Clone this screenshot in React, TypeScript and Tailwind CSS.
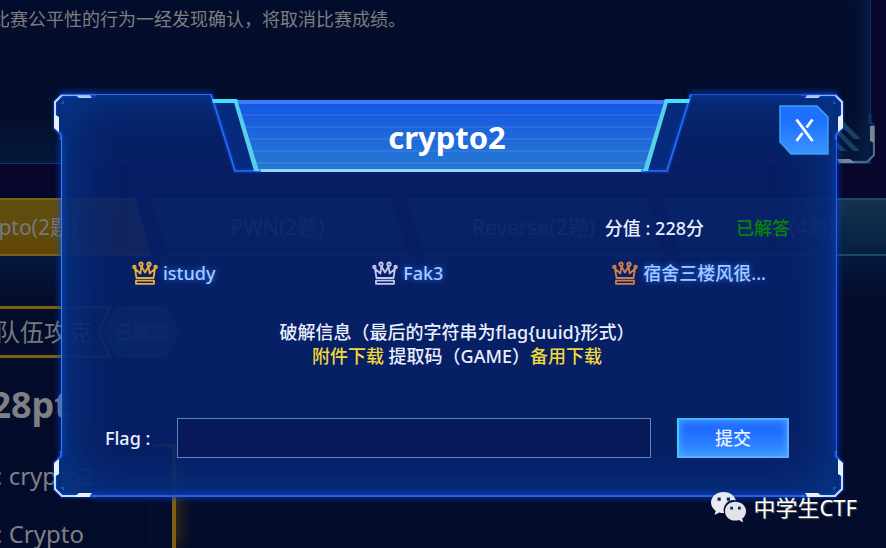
import { useState } from 'react'

const tabs = [
  { name: 'Crypto(2题)', active: true },
  { name: 'PWN(2题)', active: false },
  { name: 'Reverse(2题)', active: false },
  { name: 'Misc(4题)', active: false },
]

const solvers = [
  { name: 'istudy', color: 'text-[#e8ae3c]' },
  { name: 'Fak3', color: 'text-[#c3c6ee]' },
  { name: '宿舍三楼风很...', color: 'text-[#cf7f4c]' },
]

const Crown = ({ className }: { className: string }) => (
  <svg viewBox="0 0 26 24" className={`h-6 w-[26px] shrink-0 ${className}`} fill="none" stroke="currentColor" strokeWidth="1.8" strokeLinejoin="round">
    <path d="M4.500 17 3 7.600 8.400 12.500 9.400 5.200 13 11.500 16.600 5.200 17.600 12.500 23 7.600 21.500 17Z" />
    <path d="M4 19.600h18v3.200H4z" />
    <circle cx="2.400" cy="6" r="1.300" />
    <circle cx="9" cy="3.200" r="1.700" />
    <circle cx="17" cy="3.200" r="1.700" />
    <circle cx="23.600" cy="6" r="1.300" />
  </svg>
)

// top-left corner of the dialog frame, flipped for the other three
const Corner = ({ className }: { className: string }) => (
  <svg viewBox="0 0 46 50" className={`absolute h-[50px] w-[46px] overflow-visible ${className}`} fill="none">
    <path d="M12 45 5 38V12L12 5V45Z" fill="#082c7c" />
    <path d="M11 50V45L5 38V12L12 5H46" stroke="#0a4cff" strokeWidth="5" opacity=".35" />
    <path d="M11 50V45L5 38V12L12 5H46" stroke="#2f72e0" strokeWidth="1.6" />
    <path d="M5 38V12L12 5H40" stroke="#c4dcff" strokeWidth="2" />
    <path d="M24 4H39L42 8H29Z" fill="#e6f0ff" />
    <path d="M4 24 9 27V42L4 38Z" fill="#e6f0ff" />
    <path d="M10 14 14 10V14Z" fill="#1255b8" />
  </svg>
)

const TitleEdge = ({ className }: { className: string }) => (
  <svg viewBox="0 0 50 78" className={`absolute top-0 h-[78px] w-[50px] overflow-visible ${className}`} fill="none">
    <path d="M2 8H23L45 77H24Z" fill="#062a7e" />
    <path d="M0 0 24 77H50" stroke="#0b4dff" strokeWidth="5" opacity=".3" />
    <path d="M0 0 24 77H50" stroke="#2b70e8" strokeWidth="1.6" />
    <path d="M22 5H26L48 77H43Z" fill="#55d0e6" />
    <path d="M1 5H26L27 9H2Z" fill="#45e0ff" />
  </svg>
)

const Backdrop = () => (
  <div className="overflow-hidden">
    <section className="relative mr-[15px] h-[164px] border-r border-b border-[#0b3273] bg-linear-to-b from-[#040d2c] from-70% to-[#05183a] shadow-[inset_-16px_0_20px_-12px_#06254d] pt-[7px]">
      <p className="-ml-2 text-lg leading-6 whitespace-nowrap text-[#7d7e80]">比赛公平性的行为一经发现确认，将取消比赛成绩。</p>
      <svg viewBox="0 0 50 50" className="absolute -right-[5px] -bottom-px h-[50px] w-[50px]" fill="none">
        <path d="M45 8 49 12V41L42 48H45Z" fill="#051638" />
        <path d="M45 0V8L49 12V41L42 48H14" stroke="#0b3273" strokeWidth="3" />
        <path d="M49 12V41L42 48H14" stroke="#66738a" strokeWidth="1.6" />
        <path d="M49 12V29L45 27V12ZM12 45H25L30 49H14Z" fill="#7b8390" />
        <path d="M8 4H15L36 25H29ZM8 16H14L35 37H28ZM8 28H12L22 37H15Z" fill="#183f68" />
      </svg>
    </section>

    <nav className="mt-[34px] -ml-[105px] flex">
      {tabs.map((tab) => (
        <a
          key={tab.name}
          href="#"
          className={`-mr-px flex h-[58px] w-[257px] shrink-0 items-center justify-center border-y-2 pr-1 text-[21px] leading-7 text-[#77787c] [clip-path:polygon(0_0,240px_0,100%_100%,17px_100%)] ${
            tab.active
              ? 'border-[#77611a] bg-linear-to-b from-[#5f5010] to-[#624607]'
              : 'border-[#1c4a60] bg-linear-to-b from-[#17324f] to-[#061f41]'
          }`}
        >
          {tab.name}
        </a>
      ))}
    </nav>

    <section className="bg-linear-to-b from-[#05193d] to-[#040c2c] to-15%">
      <div className="flex pt-[50px]">
        <div className="relative flex h-[52px] w-[110px] items-center border-y-3 border-[#806010] text-2xl leading-8 text-[#77797d]">
          <span className="-ml-1 whitespace-nowrap">队伍攻克</span>
          <svg viewBox="0 0 18 52" className="absolute -top-[3px] -right-1 h-[52px] w-[18px]" fill="none">
            <path d="M14 1 3 26 14 51" stroke="#806010" strokeWidth="2.5" />
          </svg>
        </div>
        <div className="-ml-2 flex h-[52px] w-[79px] items-center justify-center bg-[#0a5050] text-[18px] font-bold text-[#5c7090] [clip-path:polygon(15px_0,64px_0,100%_50%,64px_100%,15px_100%,0_50%)]">
          已解答
        </div>
      </div>
      <div className="flex">
        <div className="w-[153px] shrink-0 pt-[23px] text-[#7f8083]">
          <p className="flex w-[70px] justify-end text-4xl leading-[48px] font-bold">28pt</p>
          <p className="mt-[31px] -ml-1 text-2xl leading-8 whitespace-nowrap">: crypto2</p>
          <p className="mt-[26px] -ml-1 text-2xl leading-8 whitespace-nowrap">: Crypto</p>
        </div>
        <div className="mt-[86px] w-[23px] border-t-3 border-r-4 border-[#806010] shadow-[6px_0_16px_-4px_#4a390c]" />
      </div>
    </section>
  </div>
)

const App = () => {
  const [flag, setFlag] = useState('')

  return (
    <main className="relative min-h-screen overflow-hidden bg-[#08062a] font-['Noto_Sans','Noto_Sans_CJK_SC',sans-serif]">
      <Backdrop />

      <div className="absolute inset-0 pt-[94px] pr-[49px] pl-[61px]">
        <div role="dialog" aria-labelledby="title" className="relative pb-[39px] text-lg leading-6 font-medium text-[#e9efff]">
          {/* frame */}
          <div className="absolute inset-0 bg-[#08216a]/90 shadow-[inset_0_0_50px_8px_#06388b] [clip-path:polygon(0_0,150px_0,153px_7px,calc(100%_-_148px)_7px,calc(100%_-_145px)_0,100%_0,100%_100%,0_100%)]" />
          <div className="absolute top-[45px] bottom-[45px] left-0 w-px bg-[#3a86ee] shadow-[0_0_6px_1px_#0a45d8]" />
          <div className="absolute top-[45px] right-0 bottom-[45px] w-px bg-[#2463f4] shadow-[0_0_6px_1px_#0a3fd8]" />
          <div className="absolute inset-x-[33px] bottom-0 h-0.5 bg-[#2463dc] shadow-[0_0_6px_1px_#0a3fc8]" />
          <Corner className="-top-[4px] -left-[11px]" />
          <Corner className="-top-[4px] -right-[10px] -scale-x-100" />
          <Corner className="-bottom-[4px] -left-[11px] -scale-y-100" />
          <Corner className="-right-[10px] -bottom-[4px] -scale-100" />

          <header className="relative flex h-[78px]">
            <div className="h-px w-[150px] bg-[#2a6cda] shadow-[0_-1px_6px_1px_#0a3fc8]" />
            <div className="relative flex-1">
              <h2
                id="title"
                className="mx-[25px] mt-[6px] flex h-[72px] items-center justify-center border-t-4 border-b-3 border-t-[#3b7bff] border-b-[#8fd6ff] bg-[repeating-linear-gradient(to_bottom,transparent_0_10px,#ffffff12_10px_12px),linear-gradient(to_bottom,#1757e2,#2478d4)] pr-2 text-[31px] font-bold text-white [clip-path:polygon(0_0,100%_0,calc(100%_-_21px)_100%,21px_100%)]"
              >
                crypto2
              </h2>
              <TitleEdge className="left-0" />
              <TitleEdge className="right-0 -scale-x-100" />
            </div>
            <div className="w-[146px]">
              <div className="h-px bg-[#1d50d8] shadow-[0_-1px_6px_1px_#0a3fc8]" />
              <button type="button" aria-label="关闭" className="mt-[10px] mr-2 ml-auto block cursor-pointer">
                <svg viewBox="0 0 50 50" className="size-[50px]" fill="none">
                  <defs>
                    <linearGradient id="close" x1="0" y1="0" x2="0" y2="1">
                      <stop offset="0.3" stopColor="#1f70ff" />
                      <stop offset="1" stopColor="#3a94ff" />
                    </linearGradient>
                  </defs>
                  <path d="M1 1H38L49 12V49H12L1 37Z" fill="url(#close)" stroke="#36a4f0" strokeWidth="1.5" />
                  <path d="M17.5 14.5 33.5 36M33.5 14.5 27.5 22.5M23.5 28 17.5 36" stroke="#fff" strokeWidth="2.8" />
                </svg>
              </button>
            </div>
          </header>

          <div className="relative mt-11 flex justify-end gap-8 pr-[47px]">
            <span>分值 : 228分</span>
            <span className="text-[#078307]">已解答</span>
          </div>

          <ul className="relative mt-[21px] grid grid-cols-[1fr_1fr_auto] pr-[71px] pl-[71px] text-[#a5caff] [text-shadow:0_0_6px_#1f6fff]">
            {solvers.map((solver) => (
              <li key={solver.name} className="flex items-center gap-[5px]">
                <Crown className={solver.color} />
                <span>{solver.name}</span>
              </li>
            ))}
          </ul>

          <div className="relative mt-[35px] pl-4 text-center">
            <p>破解信息（最后的字符串为flag{'{uuid}'}形式）</p>
            <p>
              <a href="#" className="text-[#f0d93a]">附件下载</a> 提取码（GAME）<a href="#" className="text-[#f0d93a]">备用下载</a>
            </p>
          </div>

          <form className="relative mt-[50px] flex items-center pr-12 pl-11" onSubmit={(e) => e.preventDefault()}>
            <label htmlFor="flag" className="w-[72px]">Flag :</label>
            <input
              id="flag"
              value={flag}
              onChange={(e) => setFlag(e.target.value)}
              className="h-10 min-w-0 flex-1 border border-[#5588bd] bg-[#08195a] px-3 outline-none"
            />
            <button
              type="submit"
              className="ml-[26px] h-10 w-[112px] cursor-pointer border-2 border-[#5aaeff] border-l-[#30d4f4] border-t-[#3fb4fa] bg-linear-to-b from-[#1f6cff] from-30% to-[#3792ff] shadow-[inset_0_0_8px_#58a4ff]"
            >
              提交
            </button>
          </form>
        </div>
      </div>

      {/* account watermark */}
      <div className="absolute right-[29px] bottom-[27px] flex items-center gap-[7px] text-[22px] leading-8 text-white [text-shadow:1px_1px_1px_#555]">
        <svg viewBox="0 0 35 31" className="h-[31px] w-[35px]">
          <path d="M12.5 0C5.600 0 0 4.700 0 10.600c0 3.300 1.800 6.200 4.700 8.200L3.600 23l4.700-2.600c1.600.5 3 .7 4.800.6A10 10 0 0 1 24.800 8.200C23.500 3.500 18.500 0 12.500 0Z" fill="#e9ebf1" />
          <path d="M24.300 9.800C18.300 9.800 14 14 14 19.200S18.300 28.600 24.300 28.600c1.300 0 2.500-.2 3.700-.6l4.200 2.500-1-3.700C33.500 25 35 22.300 35 19.200 35 14 30.300 9.800 24.300 9.800Z" fill="#e2e3e8" />
          <path d="M6.500 5.500h3.200v3.200H6.500zM15.800 5.500h3.200v3.200h-3.200zM19.300 14.700h2.700v2.700h-2.700zM27 14.700h2.700v2.700H27z" fill="#0d2657" />
        </svg>
        <span>中学生CTF</span>
      </div>
    </main>
  )
}

export default App
